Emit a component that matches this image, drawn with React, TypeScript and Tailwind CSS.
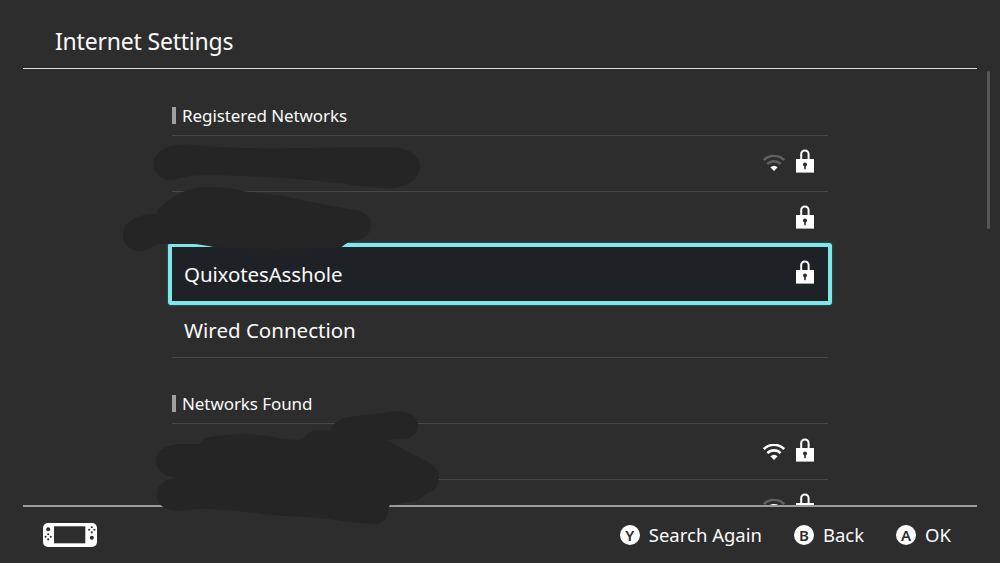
import { ReactNode } from 'react';

function LockIcon() {
  return (
    <svg className="w-[18px] h-6 shrink-0" viewBox="0 0 18 24">
      <path d="M5.2 10.5V5a3.6 3.5 0 0 1 7.4 0v5.5" fill="none" stroke="#fff" strokeWidth="2" />
      <rect y="10" width="18" height="13.6" fill="#fff" />
      <circle cx="9" cy="15.4" r="2" fill="#2d2d2d" />
      <rect x="8.2" y="16" width="1.6" height="4.2" fill="#2d2d2d" />
    </svg>
  );
}

// level: how many of the three segments are lit
function WifiIcon({ level }: { level: number }) {
  const color = (n: number) => (level >= n ? '#fff' : '#606060');
  return (
    <svg className="w-[22px] h-4 shrink-0" viewBox="0 0 22 16">
      <path d="M0.8 5a14.6 14.6 0 0 1 20.4 0" fill="none" stroke={color(3)} strokeWidth="2.5" />
      <path d="M4.4 9.1a9.3 9.3 0 0 1 13.2 0" fill="none" stroke={color(2)} strokeWidth="2.6" />
      <path d="M7.4 12.3a5 5 0 0 1 7.2 0L11 16z" fill={color(1)} />
    </svg>
  );
}

function ConsoleIcon() {
  return (
    <svg className="w-[54px] h-6" viewBox="0 0 54 24">
      <rect width="54" height="24" rx="5" fill="#fff" />
      <rect x="11" y="3.3" width="31.3" height="17" fill="#2d2d2d" />
      <g fill="#2d2d2d">
        <circle cx="5.2" cy="6.3" r="2" />
        <circle cx="5.2" cy="11.2" r="1.05" />
        <circle cx="2.6" cy="13.8" r="1.05" />
        <circle cx="7.8" cy="13.8" r="1.05" />
        <circle cx="5.2" cy="16.4" r="1.05" />
        <circle cx="48.8" cy="4.2" r="1.05" />
        <circle cx="46.2" cy="6.8" r="1.05" />
        <circle cx="51.4" cy="6.8" r="1.05" />
        <circle cx="48.8" cy="9.4" r="1.05" />
        <circle cx="48.8" cy="14.8" r="2" />
      </g>
    </svg>
  );
}

function SectionTitle({ children }: { children: ReactNode }) {
  return (
    <div className="flex items-center gap-1.5 h-[17px]">
      <span className="w-1 h-[17px] bg-[#a0a0a0]" />
      <h2 className="text-[17px] leading-[17px] tracking-[-0.08px] whitespace-nowrap">{children}</h2>
    </div>
  );
}

function Status({ level, locked }: { level?: number; locked?: boolean }) {
  return (
    <div className="flex items-end gap-[11px] h-6">
      {level !== undefined && <div className="pb-0.5"><WifiIcon level={level} /></div>}
      {locked && <LockIcon />}
    </div>
  );
}

function HintButton({ letter, label }: { letter: string; label: string }) {
  return (
    <button className="flex items-center gap-[9px]">
      <span className="w-5 h-5 rounded-full bg-white text-[#2d2d2d] text-[15px] leading-5 font-semibold text-center">
        {letter}
      </span>
      <span className="text-[18.5px] leading-6 whitespace-nowrap">{label}</span>
    </button>
  );
}

export default function App() {
  return (
    <div className="relative w-[1000px] h-[563px] overflow-hidden bg-[#2d2d2d] text-[#fafafa] font-['Noto_Sans','Open_Sans',sans-serif] flex flex-col">
      {/* Header */}
      <header className="mx-[23px] h-[69px] shrink-0 border-b border-[#dcdcdc] pl-8 pt-[26px]">
        <h1 className="text-[23px] leading-[30px] tracking-[-0.2px]">Internet Settings</h1>
      </header>

      {/* List */}
      <main className="h-[436px] shrink-0 overflow-hidden flex">
        <div className="w-[656px] ml-[172px]">
          <div className="h-[67px] pt-[38px] border-b border-[#484848]">
            <SectionTitle>Registered Networks</SectionTitle>
          </div>
          <div className="h-14 border-b border-[#484848] flex justify-end pt-[13px] pr-3.5">
            <Status level={1} locked />
          </div>
          <div className="h-[55px] flex justify-end pt-[13px] pr-3.5">
            <Status locked />
          </div>
          <div className="h-[62px] -mx-1 -mt-1 -mb-[3px] border-4 border-[#7fe6ea] rounded-[3px] bg-[#1e2227] shadow-[0_0_3px_#2c6f75] flex justify-between pt-[13px] pl-3 pr-3.5">
            <span className="text-[20.5px] leading-7 tracking-[-0.12px]">QuixotesAsshole</span>
            <Status locked />
          </div>
          <div className="h-14 border-b border-[#484848] pl-3 pt-3.5">
            <span className="block text-[20.5px] leading-7">Wired Connection</span>
          </div>

          <div className="h-[66px] pt-[37px] border-b border-[#484848]">
            <SectionTitle>Networks Found</SectionTitle>
          </div>
          <div className="h-14 border-b border-[#484848] flex justify-end pt-3.5 pr-3.5">
            <Status level={3} locked />
          </div>
          <div className="h-14 flex justify-end pt-[13px] pr-3.5">
            <Status level={2} locked />
          </div>
        </div>

        {/* Scrollbar */}
        <div className="ml-[159px] mt-0.5 w-[3px] h-[158px] rounded-full bg-[#565656]" />
      </main>

      {/* Footer */}
      <footer className="mx-[23px] flex-1 border-t-2 border-[#9c9c9c] flex items-center justify-between pl-5 pr-[26px]">
        <ConsoleIcon />
        <div className="flex items-center gap-8">
          <HintButton letter="Y" label="Search Again" />
          <HintButton letter="B" label="Back" />
          <HintButton letter="A" label="OK" />
        </div>
      </footer>

      {/* Marker strokes over the hidden network names */}
      <svg className="absolute inset-0 w-[1000px] h-[563px] pointer-events-none" viewBox="0 0 1000 563" fill="#252525">
        <path d="M154 163C154 151 168 144 187 144.5C203 145 218 148 243 148C280 149 310 148 343 147.5L393 147.5C410 148 420 156 420 166C420 179 408 188 387 188C365 187 340 183 310 180C285 178 265 177 243 176C225 175 205 175 193 175.5C182 176 176 181 167 180C159 178 154 172 154 163Z" />
        <path d="M123 235C123 224 132 214 157 214C157 211 159 208 163 205C175 195 187 187 207 187C220 187 230 188 243 191C260 194 285 195 300 200C320 204 340 207 360 211C368 214 371 219 371 225C371 234 364 239 357 240C352 240 346 243 341 247.5C300 249 250 249 217 247.5C207 246 200 244 190 244L160 244C152 245 148 251 140 251C130 251 123 244 123 235Z" />
        <path d="M156 460C156 451 166 444 183 444L200 444C202 440 205 438 210 437C225 435 235 434 243 434C265 434 280 440 297 440L303 439C306 433 312 430 317 430C322 430 326 430 330 431C333 425 337 420 344 418C355 416 375 414 390 412C405 410 418 414 418 425C418 435 410 439 400 439L387 440C398 446 408 452 420 458C433 464 439 470 439 476C439 482 438 488 432 491C424 493 421 502 409 502C401 503 396 505 390 505C388 507 389 510 388 513C385 522 380 525 370 524C350 522 325 518 307 517C285 516 270 515 257 513C240 511 215 509 200 509C190 509 180 512 173 511C162 508 157 504 157 495C157 486 164 478 177 478C166 477 156 471 156 460Z" />
      </svg>
    </div>
  );
}
